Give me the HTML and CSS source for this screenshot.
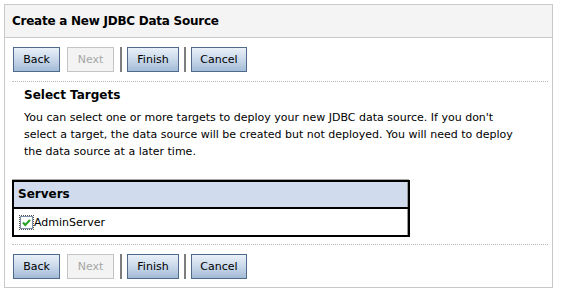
FILE: index.html
```html
<!DOCTYPE html>
<html>
<head>
<meta charset="utf-8">
<link rel="stylesheet" href="styles.css">
</head>
<body>
<div class="panel">
  <div class="panel-head">Create a New JDBC Data Source</div>
  <div class="panel-body">
    <div class="btn-row">
      <button class="btn btn-back">Back</button>
      <button class="btn btn-next disabled">Next</button>
      <span class="sep"></span>
      <button class="btn btn-finish">Finish</button>
      <span class="sep"></span>
      <button class="btn btn-cancel">Cancel</button>
    </div>
    <div class="dots"></div>
    <div class="section">
      <h2 class="section-title">Select Targets</h2>
      <p class="section-text">You can select one or more targets to deploy your new JDBC data source. If you don't select a target, the data source will be created but not deployed. You will need to deploy the data source at a later time.</p>
    </div>
    <div class="table">
      <div class="table-head">Servers</div>
      <div class="table-row">
        <span class="check">
          <svg width="13" height="13" viewBox="0 0 13 13">
            <rect x="0.5" y="0.5" width="12" height="12" fill="#fff" stroke="#7a8ea8"/>
            <path d="M3 6.5 L5.3 9 L10 3.8" fill="none" stroke="#21a121" stroke-width="2"/>
          </svg>
        </span>AdminServer
      </div>
    </div>
    <div class="dots dots-bottom"></div>
    <div class="btn-row">
      <button class="btn btn-back">Back</button>
      <button class="btn btn-next disabled">Next</button>
      <span class="sep"></span>
      <button class="btn btn-finish">Finish</button>
      <span class="sep"></span>
      <button class="btn btn-cancel">Cancel</button>
    </div>
  </div>
</div>
</body>
</html>
```
FILE: styles.css
```css
html, body {
  margin: 0;
  padding: 0;
  background: #fff;
}
body {
  font-family: "DejaVu Sans", Tahoma, sans-serif;
  font-size: 11px;
  color: #000;
}
.panel {
  margin: 4px 0 0 4px;
  width: 547px;
  height: 282px;
  border: 1px solid #c9c9c9;
}
.panel-head {
  height: 32px;
  background: #f4f4f4;
  border-bottom: 1px solid #c9c9c9;
  font-weight: bold;
  font-size: 12px;
  letter-spacing: -0.25px;
  line-height: 33px;
  padding-left: 7px;
}
.panel-body {
  padding: 9px 5px 0 7px;
}
.btn-row {
  display: flex;
  align-items: center;
  height: 25px;
  padding-left: 1px;
}
.btn {
  height: 25px;
  padding: 0;
  border: 1px solid #4d6a8a;
  background: linear-gradient(#e9f0f8, #c9d8ea 50%, #a3bbd6);
  font-family: "DejaVu Sans", Tahoma, sans-serif;
  font-size: 11px;
  color: #000;
}
.btn-back { width: 47px; margin-right: 7px; }
.btn-next { width: 47px; margin-right: 6px; }
.btn-finish { width: 52px; margin-right: 5px; }
.btn-cancel { width: 56px; }
.btn.disabled {
  border-color: #c4c4c4;
  background: #f3f3f3;
  color: #a6a6a6;
}
.sep {
  width: 2px;
  height: 25px;
  background: #7d7d7d;
  margin-right: 5px;
}
.dots {
  margin-top: 9px;
  width: 536px;
  border-top: 1px dotted #b8b8b8;
}
.section {
  padding: 5px 0 0 12px;
  height: 98px;
  box-sizing: border-box;
}
.section-title {
  margin: 0;
  font-size: 12px;
  font-weight: bold;
  line-height: 16px;
}
.section-text {
  margin: 6px 0 0;
  width: 500px;
  line-height: 17px;
}
.table {
  width: 394px;
  border: 2px solid #000;
  border-right-width: 1px;
  margin-top: 0;
  box-shadow: 0 -1px 0 #a9a9a9, 1px 0 0 #000, inset -1px 0 0 #9a9a9a;
}
.table-head {
  height: 25px;
  line-height: 25px;
  background: #d0dcee;
  font-weight: bold;
  font-size: 12px;
  padding-left: 4px;
  border-bottom: 2px solid #000;
  box-shadow: inset -1px 0 0 #9a9a9a;
}
.table-row {
  height: 26px;
  display: flex;
  align-items: center;
  padding-left: 6px;
}
.check {
  display: inline-flex;
  outline: 1px dotted #555;
  outline-offset: 0;
  margin-right: 1px;
}
.check svg { display: block; }
.dots-bottom {
  margin-top: 7px;
  margin-bottom: 9px;
}
```
